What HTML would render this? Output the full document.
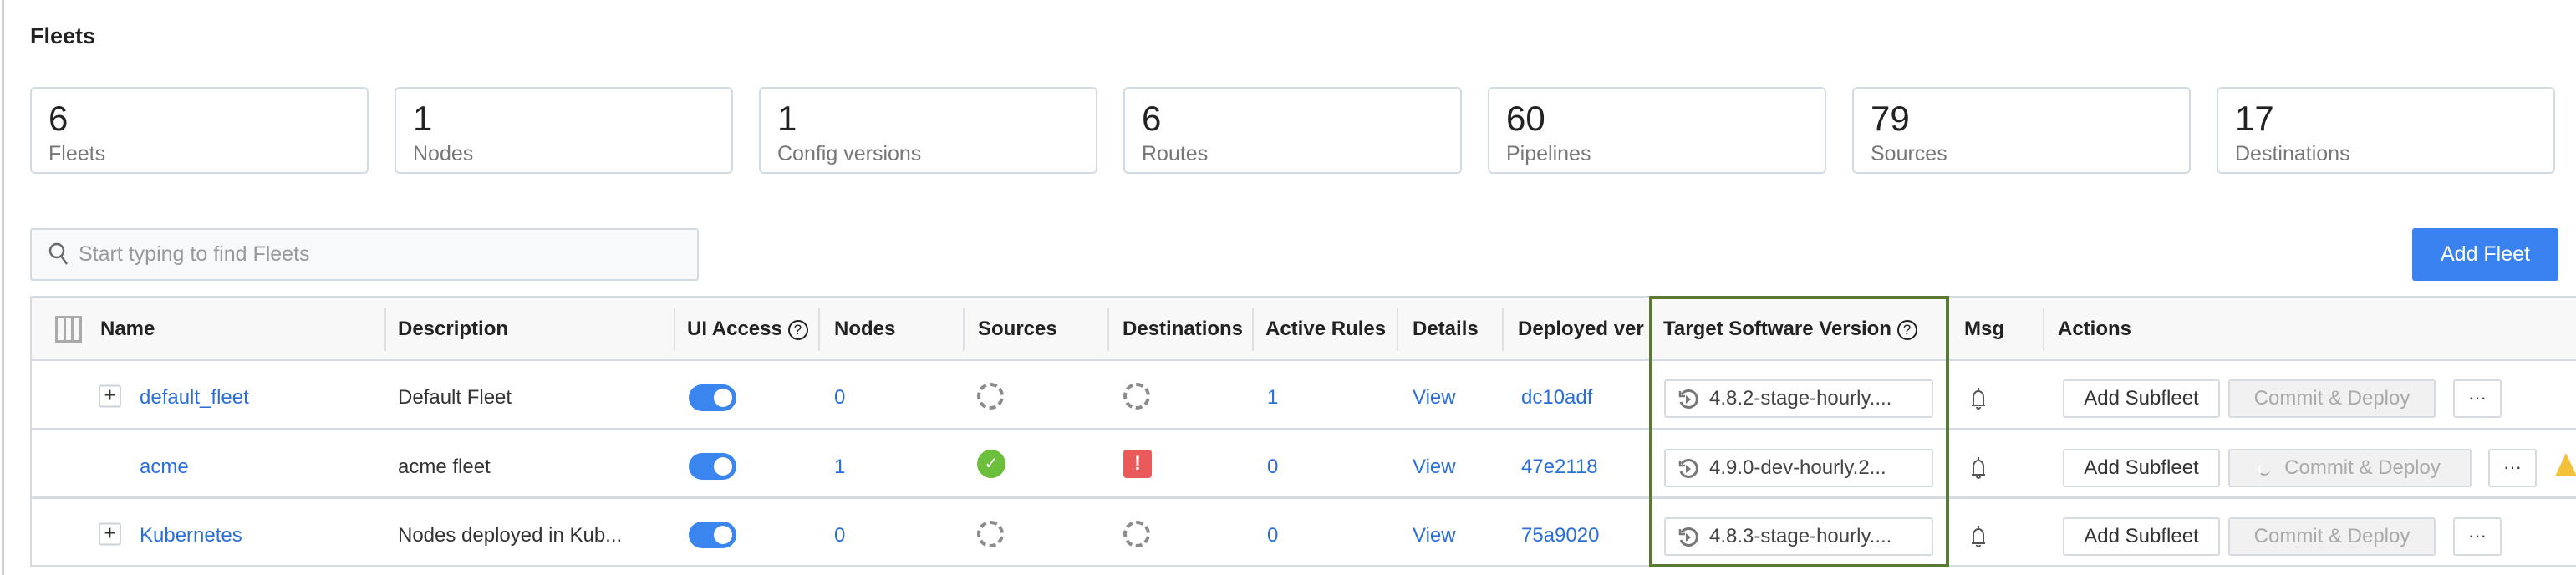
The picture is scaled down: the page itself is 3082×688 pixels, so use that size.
<!DOCTYPE html>
<html><head><meta charset="utf-8"><style>
*{box-sizing:border-box;margin:0;padding:0}
body{width:3082px;height:688px;background:#fff;font-family:"Liberation Sans",sans-serif;color:#333;position:relative;overflow:hidden}
.a{position:absolute}
.card{position:absolute;top:104px;width:405px;height:104px;border:2px solid #d3dbe2;border-radius:6px}
.card .n{position:absolute;left:20px;top:12px;font-size:42px;color:#222}
.card .l{position:absolute;left:20px;top:64px;font-size:25px;color:#777}
.th{position:absolute;top:356px;height:75px;line-height:75px;font-weight:bold;font-size:24px;color:#222;white-space:nowrap;overflow:hidden}
.sep{position:absolute;top:368px;width:2px;height:52px;background:#dde1e5}
.hl{position:absolute;left:36px;width:3046px;height:3px;background:#d5dbe1}
.td{position:absolute;font-size:24px;white-space:nowrap;transform:translateY(calc(-50% + 4px))}
.lk{color:#2a6fd9}
.tog{position:absolute;left:824px;width:57px;height:32px;border-radius:16px;background:#3b86ee;transform:translateY(-50%)}
.tog:after{content:"";position:absolute;right:5px;top:5px;width:22px;height:22px;border-radius:50%;background:#fff}
.dc{position:absolute;width:32px;height:32px;border:4px dashed #8c8c8c;border-radius:50%;transform:translate(-50%,-50%)}
.pl{position:absolute;left:118px;width:27px;height:27px;border:2px solid #ccd3da;border-radius:3px;font-size:24px;line-height:22px;text-align:center;color:#333;transform:translateY(-50%)}
.btn{position:absolute;height:46px;border:2px solid #d5dbe1;border-radius:3px;font-size:24px;line-height:42px;text-align:center;transform:translateY(-50%);white-space:nowrap;background:#fff;color:#333}
.dis{background:#f1f1f1;color:#aaa}
.dots{line-height:40px;font-size:22px}
.ver{position:absolute;left:1991px;width:322px;height:46px;border:2px solid #d5dbe1;border-radius:3px;font-size:24px;line-height:42px;padding-left:52px;color:#444;transform:translateY(-50%)}
.ver svg{position:absolute;left:14px;top:9px}
.bell{position:absolute;left:2357px;transform:translateY(-50%)}
</style></head><body>
<div class="a" style="left:2px;top:0;width:3px;height:688px;background:#d0d0d0"></div>
<div class="a" style="left:36px;top:28px;font-size:27px;font-weight:bold;color:#222">Fleets</div>

<div class="card" style="left:36px"><div class="n">6</div><div class="l">Fleets</div></div>
<div class="card" style="left:472px"><div class="n">1</div><div class="l">Nodes</div></div>
<div class="card" style="left:908px"><div class="n">1</div><div class="l">Config versions</div></div>
<div class="card" style="left:1344px"><div class="n">6</div><div class="l">Routes</div></div>
<div class="card" style="left:1780px"><div class="n">60</div><div class="l">Pipelines</div></div>
<div class="card" style="left:2216px"><div class="n">79</div><div class="l">Sources</div></div>
<div class="card" style="left:2652px"><div class="n">17</div><div class="l">Destinations</div></div>

<div class="a" style="left:36px;top:273px;width:800px;height:63px;border:2px solid #d3dbe2;border-radius:3px;background:#f8f9fa"></div>
<svg class="a" style="left:58px;top:290px" width="24" height="28" viewBox="0 0 24 28"><circle cx="10" cy="10" r="8" fill="none" stroke="#666" stroke-width="2.4"/><path d="M15 16 L22 26" stroke="#666" stroke-width="2.4"/></svg>
<div class="a" style="left:94px;top:290px;font-size:25px;color:#999">Start typing to find Fleets</div>
<div class="a" style="left:2886px;top:273px;width:175px;height:63px;background:#3a82f0;border-radius:3px;color:#fff;font-size:25px;line-height:63px;text-align:center">Add Fleet</div>

<div class="a" style="left:36px;top:354px;width:3046px;height:77px;background:#f8f8f8;border-top:3px solid #d5dbe1"></div>
<div class="hl" style="top:429px"></div>
<div class="hl" style="top:512px"></div>
<div class="hl" style="top:594px"></div>
<div class="hl" style="top:676px"></div>
<div class="a" style="left:36px;top:354px;width:2px;height:324px;background:#d5dbe1"></div>

<svg class="a" style="left:66px;top:378px" width="32" height="32" viewBox="0 0 32 32"><rect x="1.5" y="1.5" width="29" height="29" fill="none" stroke="#aaa" stroke-width="3"/><path d="M11.5 2V30M20.5 2V30" stroke="#aaa" stroke-width="3"/></svg>
<div class="th" style="left:120px">Name</div>
<div class="sep" style="left:460px"></div><div class="th" style="left:476px">Description</div>
<div class="sep" style="left:806px"></div><div class="th" style="left:822px">UI Access <span style="display:inline-block;width:24px;height:24px;border:2px solid #222;border-radius:50%;font-size:17px;line-height:20px;text-align:center;vertical-align:middle;font-weight:normal">?</span></div>
<div class="sep" style="left:979px"></div><div class="th" style="left:998px">Nodes</div>
<div class="sep" style="left:1152px"></div><div class="th" style="left:1170px">Sources</div>
<div class="sep" style="left:1325px"></div><div class="th" style="left:1343px;width:150px">Destinations</div>
<div class="sep" style="left:1498px"></div><div class="th" style="left:1514px;width:155px">Active Rules</div>
<div class="sep" style="left:1671px"></div><div class="th" style="left:1690px">Details</div>
<div class="sep" style="left:1797px"></div><div class="th" style="left:1816px;width:152px">Deployed version</div>
<div class="th" style="left:1990px">Target Software Version <span style="display:inline-block;width:24px;height:24px;border:2px solid #222;border-radius:50%;font-size:17px;line-height:20px;text-align:center;vertical-align:middle;font-weight:normal">?</span></div>
<div class="th" style="left:2350px">Msg</div>
<div class="sep" style="left:2444px"></div><div class="th" style="left:2462px">Actions</div>

<!-- rows -->
<div class="pl" style="top:474px">+</div>
<div class="td lk" style="left:167px;top:472px">default_fleet</div>
<div class="td" style="left:476px;top:472px">Default Fleet</div>
<div class="tog" style="top:476px"></div>
<div class="td lk" style="left:998px;top:472px">0</div>
<div class="dc" style="left:1185px;top:474px"></div>
<div class="dc" style="left:1360px;top:474px"></div>
<div class="td lk" style="left:1516px;top:472px">1</div>
<div class="td lk" style="left:1690px;top:472px">View</div>
<div class="td lk" style="left:1820px;top:472px">dc10adf</div>

<div class="td lk" style="left:167px;top:555px">acme</div>
<div class="td" style="left:476px;top:555px">acme fleet</div>
<div class="tog" style="top:558px"></div>
<div class="td lk" style="left:998px;top:555px">1</div>
<div class="a" style="left:1169px;top:538px;width:34px;height:34px;border-radius:50%;background:#6cbf3c;color:#fff;font-size:20px;line-height:34px;text-align:center">✓</div>
<div class="a" style="left:1344px;top:538px;width:34px;height:34px;border-radius:4px;background:#ea5a5a;color:#fff;font-size:24px;font-weight:bold;line-height:34px;text-align:center">!</div>
<div class="td lk" style="left:1516px;top:555px">0</div>
<div class="td lk" style="left:1690px;top:555px">View</div>
<div class="td lk" style="left:1820px;top:555px">47e2118</div>

<div class="pl" style="top:639px">+</div>
<div class="td lk" style="left:167px;top:637px">Kubernetes</div>
<div class="td" style="left:476px;top:637px">Nodes deployed in Kub...</div>
<div class="tog" style="top:640px"></div>
<div class="td lk" style="left:998px;top:637px">0</div>
<div class="dc" style="left:1185px;top:639px"></div>
<div class="dc" style="left:1360px;top:639px"></div>
<div class="td lk" style="left:1516px;top:637px">0</div>
<div class="td lk" style="left:1690px;top:637px">View</div>
<div class="td lk" style="left:1820px;top:637px">75a9020</div>

<!-- version boxes -->
<div class="ver" style="top:477px"><svg width="26" height="26" viewBox="0 0 26 26"><path d="M5 7A10 10 0 1 1 4 16" fill="none" stroke="#777" stroke-width="3"/><path d="M3 3V9H9" fill="none" stroke="#777" stroke-width="2.5"/><path d="M10 8L16 13L10 18Z" fill="#777"/></svg>4.8.2-stage-hourly....</div>
<div class="ver" style="top:560px"><svg width="26" height="26" viewBox="0 0 26 26"><path d="M5 7A10 10 0 1 1 4 16" fill="none" stroke="#777" stroke-width="3"/><path d="M3 3V9H9" fill="none" stroke="#777" stroke-width="2.5"/><path d="M10 8L16 13L10 18Z" fill="#777"/></svg>4.9.0-dev-hourly.2...</div>
<div class="ver" style="top:642px"><svg width="26" height="26" viewBox="0 0 26 26"><path d="M5 7A10 10 0 1 1 4 16" fill="none" stroke="#777" stroke-width="3"/><path d="M3 3V9H9" fill="none" stroke="#777" stroke-width="2.5"/><path d="M10 8L16 13L10 18Z" fill="#777"/></svg>4.8.3-stage-hourly....</div>

<svg class="bell" style="top:477px" width="20" height="30" viewBox="0 0 20 30"><path d="M10 2V5M4 22V13A6 7 0 0 1 16 13V22M2 23H18M8 25A2 2 0 0 0 12 25" fill="none" stroke="#555" stroke-width="2"/></svg>
<svg class="bell" style="top:560px" width="20" height="30" viewBox="0 0 20 30"><path d="M10 2V5M4 22V13A6 7 0 0 1 16 13V22M2 23H18M8 25A2 2 0 0 0 12 25" fill="none" stroke="#555" stroke-width="2"/></svg>
<svg class="bell" style="top:642px" width="20" height="30" viewBox="0 0 20 30"><path d="M10 2V5M4 22V13A6 7 0 0 1 16 13V22M2 23H18M8 25A2 2 0 0 0 12 25" fill="none" stroke="#555" stroke-width="2"/></svg>

<div class="btn" style="left:2468px;width:188px;top:477px">Add Subfleet</div>
<div class="btn dis" style="left:2666px;width:248px;top:477px">Commit &amp; Deploy</div>
<div class="btn dots" style="left:2935px;width:58px;top:477px">···</div>

<div class="btn" style="left:2468px;width:188px;top:560px">Add Subfleet</div>
<div class="btn dis" style="left:2666px;width:291px;top:560px;padding-left:30px">Commit &amp; Deploy</div>
<div class="a" style="left:2702px;top:555px;width:14px;height:14px;border-bottom:2px solid #aaa;border-left:2px solid #fff;border-radius:50%"></div>
<div class="btn dots" style="left:2977px;width:58px;top:560px">···</div>
<svg class="a" style="left:3055px;top:540px" width="30" height="32" viewBox="0 0 30 32"><path d="M15 2L28 30H2Z" fill="#f3c13a"/></svg>

<div class="btn" style="left:2468px;width:188px;top:642px">Add Subfleet</div>
<div class="btn dis" style="left:2666px;width:248px;top:642px">Commit &amp; Deploy</div>
<div class="btn dots" style="left:2935px;width:58px;top:642px">···</div>

<div class="a" style="left:1973px;top:354px;width:359px;height:325px;border:4px solid #5a7a34"></div>
</body></html>
